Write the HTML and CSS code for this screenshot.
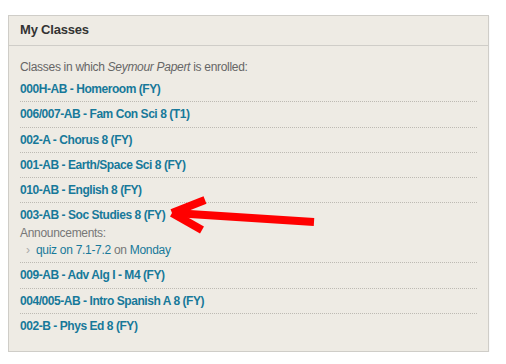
FILE: index.html
```html
<!DOCTYPE html>
<html lang="en">
<head>
  <meta charset="UTF-8">
  <title>My Classes</title>
  <link rel="stylesheet" href="styles.css">
</head>
<body>

<div class="panel">
  <div class="panel-head">My Classes</div>
  <div class="panel-body">
    <p class="intro">Classes in which <em>Seymour Papert</em> is enrolled:</p>
    <ul class="classes">
      <li><a href="#">000H-AB - Homeroom (FY)</a></li>
      <li><a href="#">006/007-AB - Fam Con Sci 8 (T1)</a></li>
      <li><a href="#">002-A - Chorus 8 (FY)</a></li>
      <li><a href="#">001-AB - Earth/Space Sci 8 (FY)</a></li>
      <li><a href="#">010-AB - English 8 (FY)</a></li>
      <li class="has-news">
        <a href="#">003-AB - Soc Studies 8 (FY)</a>
        <div class="news-label">Announcements:</div>
        <div class="news-item"><span class="chev">&rsaquo;</span><span class="news-link">quiz on 7.1-7.2</span> on <span class="news-link">Monday</span></div>
        <svg class="arrow" width="150" height="40" viewBox="0 0 150 40">
          <g stroke="#ff0000" stroke-width="8" fill="none">
            <line x1="6" y1="18" x2="146" y2="27"/>
            <line x1="4" y1="18" x2="37" y2="5"/>
            <line x1="4" y1="18" x2="34" y2="35"/>
          </g>
        </svg>
      </li>
      <li><a href="#">009-AB - Adv Alg I - M4 (FY)</a></li>
      <li><a href="#">004/005-AB - Intro Spanish A 8 (FY)</a></li>
      <li><a href="#">002-B - Phys Ed 8 (FY)</a></li>
    </ul>
  </div>
</div>

</body>
</html>
```

FILE: styles.css
```css
* {
  box-sizing: border-box;
}

body {
  font-family: "Liberation Sans", Arial, sans-serif;
  font-size: 12px;
  letter-spacing: -0.3px;
  color: #666;
  background: #fff;
  margin: 15px 8px;
}

.panel {
  width: 481px;
  background: #eeebe4;
  border: 1px solid #cfcdc8;
  box-shadow: 0 1px 1px rgba(0,0,0,0.12);
}

.panel-head {
  height: 30px;
  line-height: 28px;
  padding: 0 11px;
  font-size: 13px;
  font-weight: bold;
  color: #333;
  letter-spacing: -0.2px;
  border-bottom: 1px solid #cfcdc8;
}

.panel-body {
  padding: 13px 11px 13px;
}

.intro {
  margin: 0 0 1px;
  line-height: 17px;
}

.classes {
  list-style: none;
  margin: 0;
  padding: 0;
}

.classes li {
  position: relative;
  padding: 4px 0 3px;
  line-height: 17.3px;
  border-bottom: 1px dotted #bdbab3;
}

.classes li:last-child {
  border-bottom: none;
}

.classes a {
  color: #17799a;
  font-weight: bold;
  letter-spacing: -0.45px;
  text-decoration: none;
}

.news-label {
  color: #777;
}

.news-item {
  padding-left: 6px;
  color: #777;
}

.chev {
  color: #aaa;
  display: inline-block;
  width: 10px;
}

.news-link {
  color: #17799a;
}

.arrow {
  position: absolute;
  left: 148px;
  top: -8px;
}
```
